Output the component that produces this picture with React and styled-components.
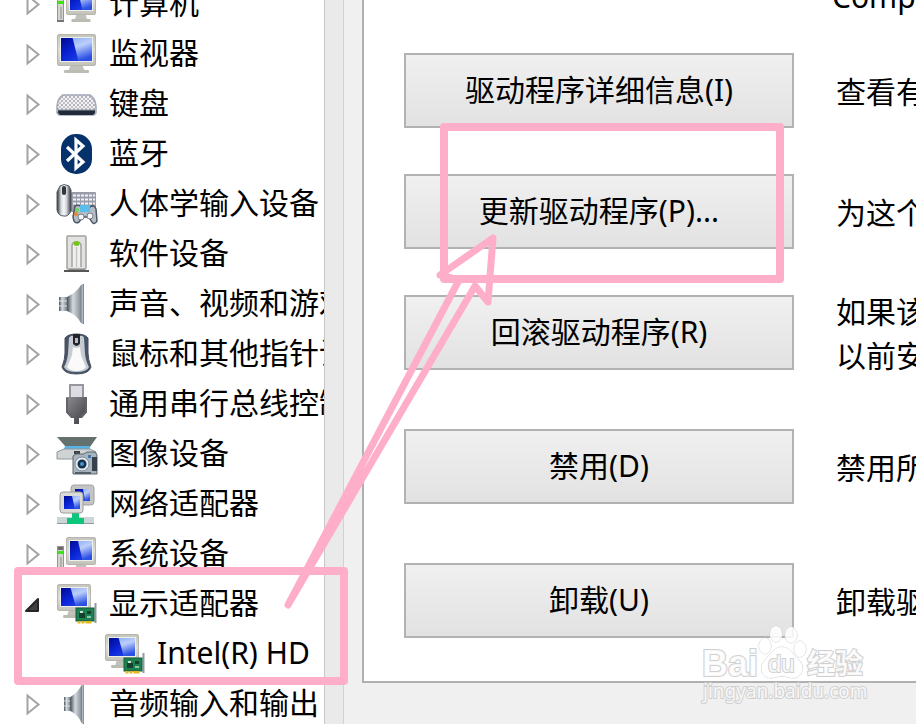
import React, { useState } from "react";
import styled, { createGlobalStyle } from "styled-components";

const GlobalStyle = createGlobalStyle`
  * {
    box-sizing: border-box;
  }
  body {
    margin: 0;
    overflow: hidden;
    background: #f0f0f0;
    color: #000;
    font-family: "Noto Sans", "Noto Sans CJK SC", sans-serif;
    font-size: 30px;
  }
`;

const StyledPage = styled.div`
  position: relative;
  display: flex;
  height: 100vh;
  overflow: hidden;
`;

const StyledTreePanel = styled.nav`
  flex: 0 0 325px;
  overflow: hidden;
  background: #fff;
  border-right: 1px solid #c8c8c8;
`;

const StyledTree = styled.ul`
  list-style: none;
  margin: -21px 0 0;
  padding: 0;
`;

const StyledTreeRow = styled.li`
  display: flex;
  align-items: center;
  height: 50px;
  padding-left: ${(props) => (props.$child ? 105 : 24)}px;
  white-space: nowrap;
`;

const StyledExpander = styled.button`
  display: flex;
  flex: none;
  width: 18px;
  height: 24px;
  margin-right: 15px;
  padding: 0;
  border: 0;
  background: none;
`;

const StyledTreeIcon = styled.svg`
  flex: none;
  width: 40px;
  height: 40px;
  margin-right: 12px;
  overflow: visible;
`;

const StyledTreeLabel = styled.span`
  line-height: 48px;
  padding-bottom: 2px;
`;

const StyledScrollTrack = styled.div`
  flex: 0 0 19px;
  background: #eaeaea;
  border-right: 1px solid #d2d2d2;
`;

const StyledTabArea = styled.main`
  flex: 1;
  min-width: 0;
  padding-left: 18px;
`;

const StyledTabPage = styled.section`
  display: flex;
  flex-direction: column;
  background: #fff;
  border-left: 2px solid #b0b0b0;
  border-bottom: 2px solid #b0b0b0;
  padding: 0 0 43px 40px;
  overflow: hidden;
`;

const StyledDeviceName = styled.div`
  display: flex;
  align-items: flex-start;
  height: 78px;
  margin: -25px 0 0 428px;
  line-height: 44px;
  white-space: nowrap;
`;

const StyledActionRow = styled.div`
  display: grid;
  grid-template-columns: 390px 1fr;
  grid-template-rows: 75px;
  column-gap: 42px;
  align-items: center;
  margin-bottom: ${(props) => props.$gap}px;
`;

const StyledActionButton = styled.button`
  height: 75px;
  padding: 0 0 6px;
  border: 2px solid #b2b2b2;
  background: linear-gradient(#f0f0f0, #e2e2e2);
  color: #000;
  font: inherit;
`;

const StyledActionText = styled.p`
  margin: 2px 0 0;
  line-height: 44px;
  white-space: pre;
`;

const StyledMarks = styled.svg`
  position: absolute;
  top: 0;
  left: 0;
  pointer-events: none;
`;

const StyledDefs = styled.svg`
  position: absolute;
`;

const Defs = () => (
  <StyledDefs width="0" height="0">
    <defs>
      <linearGradient id="screen" x1="0" y1="0" x2="1" y2="1">
        <stop offset="0" stopColor="#000a90" />
        <stop offset="0.45" stopColor="#0a24d8" />
        <stop offset="1" stopColor="#2a50e8" />
      </linearGradient>
      <linearGradient id="glare" x1="0" y1="0" x2="0.3" y2="1">
        <stop offset="0" stopColor="#8fb0f6" />
        <stop offset="0.4" stopColor="#bccffa" />
        <stop offset="1" stopColor="#2c50e4" />
      </linearGradient>
      <linearGradient id="shell" x1="0" y1="0" x2="0" y2="1">
        <stop offset="0" stopColor="#c4c4bc" />
        <stop offset="0.5" stopColor="#dededa" />
        <stop offset="1" stopColor="#c2c2ba" />
      </linearGradient>
      <linearGradient id="steel" x1="0" y1="0" x2="1" y2="0">
        <stop offset="0" stopColor="#4a525c" />
        <stop offset="0.35" stopColor="#d4dade" />
        <stop offset="0.7" stopColor="#9aa2aa" />
        <stop offset="1" stopColor="#535b64" />
      </linearGradient>
      <linearGradient id="mouse" x1="0" y1="0" x2="1" y2="0">
        <stop offset="0" stopColor="#2b2f36" />
        <stop offset="0.3" stopColor="#d8dbe0" />
        <stop offset="0.5" stopColor="#f8f8f8" />
        <stop offset="0.7" stopColor="#c9cdd3" />
        <stop offset="1" stopColor="#30343c" />
      </linearGradient>
      <linearGradient id="plug" x1="0" y1="0" x2="1" y2="1">
        <stop offset="0" stopColor="#8d8d92" />
        <stop offset="1" stopColor="#3b3b40" />
      </linearGradient>
      <pattern id="keys" width="4" height="4" patternUnits="userSpaceOnUse">
        <rect width="4" height="4" fill="#f2f2f4" />
        <rect width="2" height="2" fill="#b4b4ba" />
        <rect x="2" y="2" width="2" height="2" fill="#c0c0c6" />
      </pattern>
    </defs>
  </StyledDefs>
);

// w x h monitor with its stand, top left corner at x, y
const Screen = ({ x = 0, y = 0, w = 39, h = 32 }) => (
  <g transform={`translate(${x} ${y})`}>
    <path d={`M${w * 0.34} ${h}H${w * 0.66}L${w * 0.7} ${h + 4}H${w * 0.3}z`} fill="#c2c2bc" />
    <rect x={w * 0.18} y={h + 4} width={w * 0.64} height="3" rx="1" fill="#bcbcb5" />
    <rect x="0.5" y="0.5" width={w - 1} height={h - 1} rx="1.5" fill="url(#shell)" stroke="#b6b6ae" />
    <rect x="3" y="3" width={w - 6} height={h - 7} fill="#eeeee8" />
    <rect x="4" y="4" width={w - 8} height={h - 9} fill="url(#screen)" />
    <path d={`M${w * 0.4} 4H${w - 4}V${h - 5}H${w * 0.55}z`} fill="url(#glare)" />
  </g>
);

const Computer = () => (
  <>
    <rect x="0.5" y="12.5" width="6" height="25" fill="#d4d4d0" stroke="#96968f" />
    <rect x="1" y="13" width="5" height="3" fill="#6b6b68" />
    <rect x="1" y="17" width="5" height="3" fill="#43e01c" />
    <rect x="3" y="23" width="2" height="12" fill="#b2b2ad" />
    <rect x="0" y="36" width="7" height="2" fill="#777" />
    <Screen x={9} y={3} w={30} h={28} />
  </>
);

const Keyboard = () => (
  <>
    <path d="M6 11H33Q38 14 39 22V29L37 31H2L0 29V22Q1 14 6 11z" fill="url(#keys)" stroke="#a3a7b6" strokeWidth="1.5" />
    <path d="M1 26H38V29L36 31H3L1 29z" fill="#202a38" />
    <path d="M1 26H38" stroke="#8993a3" />
  </>
);

const Bluetooth = () => (
  <>
    <rect x="4" y="0" width="31" height="40" rx="15" fill="#06326b" />
    <path d="M10 13L26 28L19 34V6L26 12L10 27" fill="none" stroke="#fff" strokeWidth="3.2" />
  </>
);

const HumanInput = () => (
  <>
    <rect x="14" y="8" width="25" height="20" rx="1" fill="#9a9da9" />
    <path d="M16 11.5H38M16 15.5H38M16 19.5H38" stroke="#f2f3f8" strokeWidth="2" strokeDasharray="3 1" />
    <path d="M3 2Q7 -1 12 2L14 6V27Q11 33 7 32Q1 32 0 26V8z" fill="url(#mouse)" stroke="#54585f" />
    <rect x="5" y="2" width="4" height="9" rx="2" fill="#32353b" />
    <path d="M18 22Q22 20 24 23H33Q37 20 39 25L40 37Q37 43 33 35L30 33H26L22 38Q17 41 16 33z" fill="#b4bcc6" stroke="#4d5664" strokeWidth="1.5" />
    <rect x="23" y="21" width="10" height="7" fill="#5cbcec" />
    <circle cx="19" cy="30" r="2" fill="#e9852a" />
    <circle cx="20" cy="26" r="2" fill="#6cd45a" />
    <circle cx="33" cy="32" r="3" fill="#f5f5f5" stroke="#767d86" />
    <circle cx="24" cy="33" r="3" fill="#f5f5f5" stroke="#767d86" />
  </>
);

const Software = () => (
  <>
    <path d="M12 33H28V36H32V38H7V36H12z" fill="#565656" />
    <rect x="10" y="2" width="19" height="33" rx="1" fill="#e2e2e0" stroke="#a1a19f" strokeWidth="1.5" />
    <path d="M15 33V12Q15 8 19.5 8Q24 8 24 12V33" fill="#f0f0f0" stroke="#a3a3a1" strokeWidth="1.5" />
    <ellipse cx="19.5" cy="9.5" rx="3" ry="2.5" fill="#74c61d" />
    <path d="M19.5 13V33" stroke="#c5c5c3" strokeWidth="1.5" />
  </>
);

const Speaker = ({ x = 2, scale = 1 }) => (
  <g transform={`translate(${x} 0) scale(${scale} 1)`}>
    <rect x="0" y="13" width="9" height="14" fill="url(#steel)" />
    <path d="M0 17H8M0 22H8" stroke="#dce2e6" />
    <path d="M8 13Q18 8 22 1L25 0V40L22 39Q18 31 8 27z" fill="url(#steel)" />
    <path d="M23.5 1V39" stroke="#aeb8c0" strokeWidth="2" />
  </g>
);

const Mouse = () => (
  <>
    <path d="M8 4Q11 0 19.500 0Q28 0 31 4V19Q31 25 34 33Q32 40 19.500 40Q7 40 5 33Q8 25 8 19z" fill="#46556a" stroke="#4a4f58" />
    <path d="M12 4Q14 1 16 2V10Q19.500 13 23 10V2Q26 1 27 4L28 20Q29 28 32 33Q30 38 19.500 38Q9 38 7 33Q10 28 11 20z" fill="#c8cbd0" />
    <path d="M16 13Q19.500 15 23 13L24 21Q26 27 29 33Q26 37 19.500 37Q13 37 10 33Q13 27 15 21z" fill="#fafafa" />
    <path d="M16 0H23V9Q19.500 15 16 9z" fill="#22252b" />
    <rect x="18" y="4" width="3" height="5" fill="#b8bcc2" />
  </>
);

const UsbPlug = () => (
  <>
    <rect x="13" y="1" width="13" height="14" fill="#dcdce2" stroke="#96969e" strokeWidth="2" />
    <path d="M9 13H30V28L25 34H22V40H17V34H14L9 28z" fill="url(#plug)" />
    <path d="M10 14V28L15 33M29 14V28L24 33" fill="none" stroke="#626268" strokeWidth="2" />
  </>
);

const Imaging = () => (
  <>
    <path d="M0 3H40L33 13H9z" fill="#65716f" />
    <path d="M8 12H33V15H7z" fill="#58b4e6" />
    <path d="M0 18L7 15H33L39 18V25H0z" fill="#d0d3d4" stroke="#90979a" />
    <rect x="17" y="17" width="6" height="3" fill="#3d4346" />
    <path d="M16 22L19 20H27L30 18H38L40 21V40H16z" fill="#a8b4be" stroke="#5b6670" />
    <path d="M35 23H40V37H35z" fill="#38404a" />
    <path d="M18 39H34" stroke="#536069" strokeWidth="2" />
    <circle cx="25" cy="30" r="7" fill="#e3ebf0" stroke="#7f8c96" />
    <circle cx="25" cy="30" r="4.5" fill="#16304a" />
    <circle cx="25" cy="30" r="2" fill="#4a91d0" />
    <rect x="31" y="21" width="3" height="3" fill="#3f78b0" />
  </>
);

const Network = () => (
  <>
    <rect x="14" y="1" width="23" height="20" rx="3" fill="#c4c4c4" stroke="#a2a2a2" />
    <rect x="18" y="5" width="15" height="12" fill="url(#screen)" />
    <path d="M26 5H33V17H28z" fill="url(#glare)" />
    <rect x="0" y="33" width="37" height="7" fill="#ccd6d8" />
    <path d="M0 39.5H37" stroke="#939da0" />
    <path d="M15 28H22V34H27V40H10V34H15z" fill="#0bc67b" />
    <rect x="3" y="8" width="23" height="21" rx="3" fill="#dadad8" stroke="#9c9c9a" />
    <rect x="7" y="12" width="16" height="13" fill="url(#screen)" />
    <path d="M15 12H23V25H18z" fill="url(#glare)" />
  </>
);

const Display = () => (
  <>
    <Screen x={0} y={0} w={34} h={27} />
    <path d="M38.5 19V39" stroke="#9098a0" strokeWidth="2" />
    <rect x="19" y="24" width="18" height="13" fill="#1e7f50" stroke="#155e3b" />
    <path d="M22 37V39.5M26 37V39.5M30 37V39.5M33 37V39.5" stroke="#e4b81c" strokeWidth="3" />
    <rect x="22" y="29" width="6" height="5" fill="#12422c" />
    <rect x="23" y="27" width="3" height="2" fill="#c5e2d0" />
    <rect x="30" y="27" width="4" height="3" fill="#12422c" />
    <rect x="30" y="32" width="4" height="2" fill="#8fc8a8" />
  </>
);

const devices = [
  { name: '计算机', icon: <Computer /> },
  { name: '监视器', icon: <Screen /> },
  { name: '键盘', icon: <Keyboard /> },
  { name: '蓝牙', icon: <Bluetooth /> },
  { name: '人体学输入设备', icon: <HumanInput /> },
  { name: '软件设备', icon: <Software /> },
  { name: '声音、视频和游戏', icon: <Speaker /> },
  { name: '鼠标和其他指针设', icon: <Mouse /> },
  { name: '通用串行总线控制', icon: <UsbPlug /> },
  { name: '图像设备', icon: <Imaging /> },
  { name: '网络适配器', icon: <Network /> },
  { name: '系统设备', icon: <Computer /> },
  { name: '显示适配器', icon: <Display />, children: ['Intel(R) HD'] },
  { name: '音频输入和输出', icon: <Speaker x={7} scale={0.8} /> },
];

const actions = [
  { label: '驱动程序详细信息(I)', text: '查看有', gap: 46 },
  { label: '更新驱动程序(P)...', text: '为这个', gap: 46 },
  { label: '回滚驱动程序(R)', text: '如果该\n以前安', gap: 59 },
  { label: '禁用(D)', text: '禁用所', gap: 59 },
  { label: '卸载(U)', text: '卸载驱', gap: 0 },
];

function DeviceNode({ device }) {
  const [open, setOpen] = useState(Boolean(device.children));

  return (
    <>
      <StyledTreeRow>
        <StyledExpander aria-label={device.name} aria-expanded={open} onClick={() => setOpen(!open)}>
          <svg width="18" height="24" viewBox="0 0 18 24">
            {
              open
              ? <path d="M14 7V19H2z" fill="#404040" stroke="#262626" strokeWidth="2" strokeLinejoin="round" />
              : <path d="M3.5 3.5V21.5L14.5 12.5z" fill="#fff" stroke="#a3a3a3" strokeWidth="2" />
            }
          </svg>
        </StyledExpander>
        <StyledTreeIcon viewBox="0 0 40 40">{device.icon}</StyledTreeIcon>
        <StyledTreeLabel>{device.name}</StyledTreeLabel>
      </StyledTreeRow>
      {
        open && (device.children || []).map((child) => (
          <StyledTreeRow key={child} $child>
            <StyledTreeIcon viewBox="0 0 40 40"><Display /></StyledTreeIcon>
            <StyledTreeLabel>{child}</StyledTreeLabel>
          </StyledTreeRow>
        ))
      }
    </>
  );
}

const Marks = () => (
  <StyledMarks width="916" height="724" viewBox="0 0 916 724">
    <g fill="#fff" stroke="#d0d0d0" strokeWidth="2" paintOrder="stroke" fillOpacity="0.85">
      <ellipse cx="765" cy="646" rx="6" ry="8" strokeWidth="1" />
      <ellipse cx="776" cy="634" rx="6" ry="8" strokeWidth="1" />
      <ellipse cx="791" cy="635" rx="6" ry="8" strokeWidth="1" />
      <ellipse cx="800" cy="649" rx="6" ry="8" strokeWidth="1" />
      <path d="M782 647C790 647 793 655 799 660C806 667 802 678 793 678C788 678 786 676 782 676C778 676 776 678 771 678C761 678 759 668 764 661C770 655 774 647 782 647z" strokeWidth="1" />
      <text x="702" y="676" fontFamily="Liberation Sans, sans-serif" fontSize="36" fontWeight="bold">Bai</text>
      <text x="768" y="672" fontFamily="Liberation Sans, sans-serif" fontSize="24">du</text>
      <text x="807" y="674" fontFamily="Noto Sans CJK SC, sans-serif" fontSize="28" fontWeight="bold">经验</text>
      <text x="703" y="698" fontFamily="Noto Sans, sans-serif" fontSize="19">jingyan.baidu.com</text>
    </g>
    <g fill="none" stroke="#ffaec9" strokeWidth="8" strokeLinejoin="round" strokeLinecap="round">
      <rect x="444" y="127" width="336" height="152" />
      <rect x="18" y="571" width="326" height="110" />
      <path d="M288 605L459 280L440 275L493 238L488 302L475 286z" strokeWidth="7" />
    </g>
  </StyledMarks>
);

function App() {
  return (
    <>
      <GlobalStyle />
      <Defs />
      <StyledPage>
        <StyledTreePanel>
          <StyledTree>
            {devices.map((device) => <DeviceNode key={device.name} device={device} />)}
          </StyledTree>
        </StyledTreePanel>
        <StyledScrollTrack />
        <StyledTabArea>
          <StyledTabPage>
            <StyledDeviceName>Comp</StyledDeviceName>
            {
              actions.map((action, index) => (
                <StyledActionRow key={index} $gap={action.gap}>
                  <StyledActionButton aria-describedby={`action-${index}`}>{action.label}</StyledActionButton>
                  <StyledActionText id={`action-${index}`}>{action.text}</StyledActionText>
                </StyledActionRow>
              ))
            }
          </StyledTabPage>
        </StyledTabArea>
        <Marks />
      </StyledPage>
    </>
  )
}

export default App;
